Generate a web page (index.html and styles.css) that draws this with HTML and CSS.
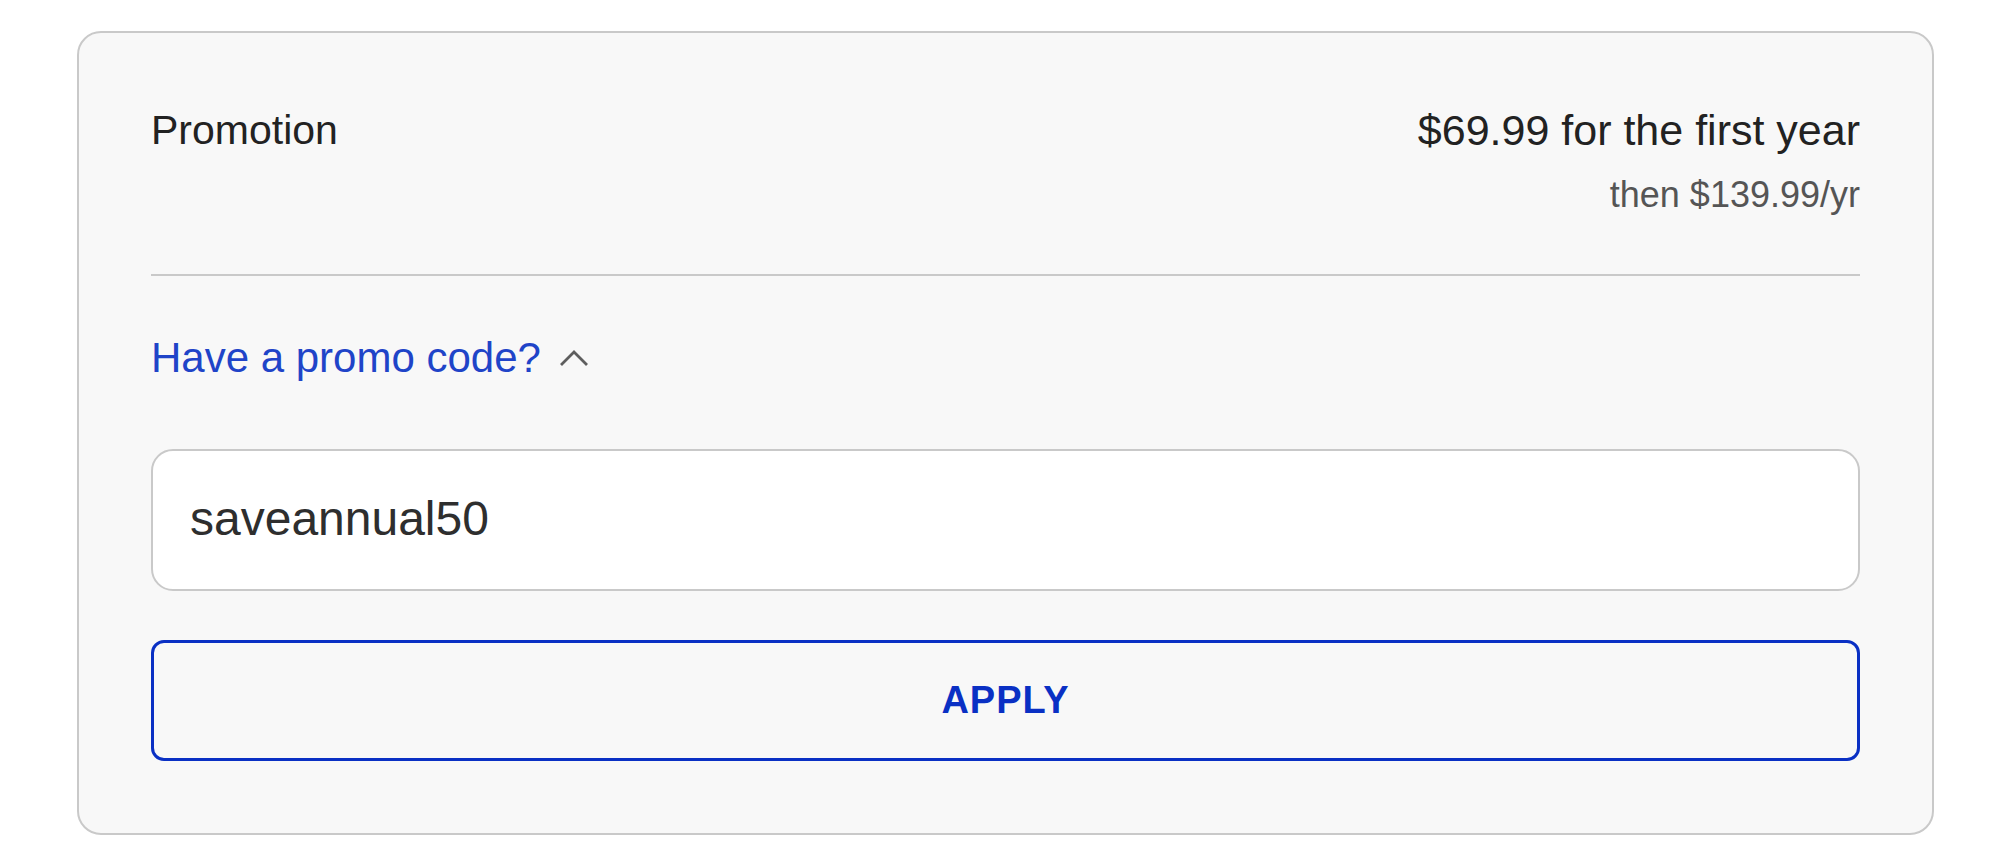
FILE: index.html
```html
<!DOCTYPE html>
<html lang="en">
  <head>
    <meta charset="UTF-8" />
    <meta name="viewport" content="width=device-width, initial-scale=1.0" />
    <title>Promo Code</title>
    <link rel="stylesheet" href="styles.css">
  </head>
  <body>
    <div class="promo-card">
      <div class="summary">
        <span class="summary-label">Promotion</span>
        <div class="summary-price">
          <div class="price-main">$69.99 for the first year</div>
          <div class="price-sub">then $139.99/yr</div>
        </div>
      </div>

      <div class="divider"></div>

      <button type="button" class="promo-toggle">
        Have a promo code?
        <svg class="chevron" width="32" height="18" viewBox="0 0 32 18">
          <polyline points="3,16 16,3 29,16" fill="none" stroke="#5e5e5e" stroke-width="2.8" />
        </svg>
      </button>

      <form class="promo-form">
        <input type="text" class="promo-input" name="promo" value="saveannual50" />
        <button type="button" class="apply-btn">APPLY</button>
      </form>
    </div>
  </body>
</html>
```

FILE: styles.css
```css
body {
  margin: 0;
  background-color: #ffffff;
  font-family: "Liberation Sans", Arial, sans-serif;
  color: #222222;
}

.promo-card {
  margin: 31px 0 0 77px;
  width: 1857px;
  box-sizing: border-box;
  padding: 71px 72px 72px 72px;
  background-color: #f8f8f8;
  border: 2px solid #c9c9c9;
  border-radius: 24px;
}

.summary {
  display: flex;
  justify-content: space-between;
  align-items: flex-start;
}

.summary-label {
  font-size: 41px;
  line-height: 52px;
  color: #222222;
}

.price-main {
  font-size: 43px;
  line-height: 52px;
  color: #222222;
}

.summary-price {
  text-align: right;
}

.price-sub {
  margin-top: 17px;
  font-size: 36px;
  line-height: 44px;
  color: #555555;
}

.divider {
  height: 2px;
  margin-top: 57px;
  background-color: #c9c9c9;
}

.promo-toggle {
  display: flex;
  align-items: center;
  gap: 17px;
  margin-top: 56px;
  padding: 0;
  border: none;
  background: none;
  font-family: inherit;
  font-size: 42px;
  line-height: 52px;
  color: #1f44c8;
  cursor: pointer;
}

.chevron {
  display: block;
}

.promo-form {
  display: flex;
  flex-direction: column;
  gap: 49px;
  margin-top: 65px;
}

.promo-input {
  height: 142px;
  box-sizing: border-box;
  padding: 0 37px 4px 37px;
  border: 2px solid #c9c9c9;
  border-radius: 22px;
  background-color: #ffffff;
  font-family: inherit;
  font-size: 48px;
  color: #2e2e2e;
  outline: none;
}

.apply-btn {
  height: 121px;
  box-sizing: border-box;
  border: 3px solid #0a30c4;
  border-radius: 13px;
  background: transparent;
  font-family: inherit;
  font-size: 38px;
  font-weight: bold;
  letter-spacing: 1px;
  color: #0a30c4;
  cursor: pointer;
}
```
